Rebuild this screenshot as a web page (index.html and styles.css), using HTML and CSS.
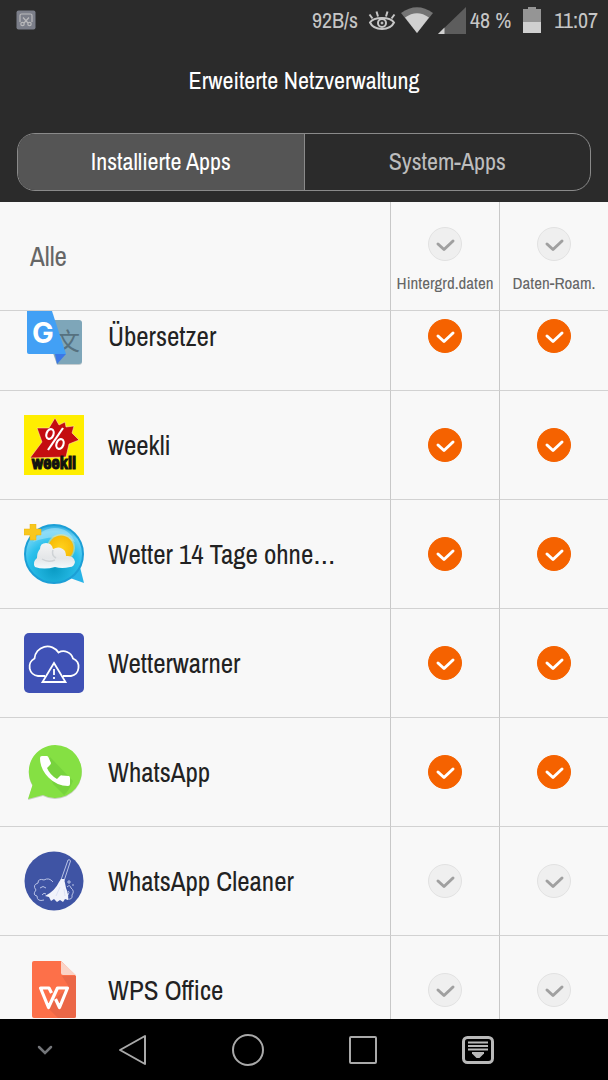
FILE: index.html
```html
<!DOCTYPE html>
<html lang="de">
<head>
    <meta charset="UTF-8">
    <meta name="viewport" content="width=device-width, initial-scale=1.0">
    <title>Erweiterte Netzverwaltung</title>
    <link rel="stylesheet" href="styles.css">
</head>
<body>
    <header class="top">
        <div class="status-bar">
            <svg class="shot-icon" width="20" height="20" viewBox="0 0 20 20">
                <rect x="0.5" y="0.5" width="19" height="19" rx="2" fill="#7b7e89"/>
                <g fill="none" stroke="#b9b9bb" stroke-width="1.2">
                    <path d="M4 12V5.500Q4 4 5.500 4H14.500Q16 4 16 5.500V12M7 7.500L12 13M13 7.500L8 13"/>
                    <circle cx="6.500" cy="14" r="1.700"/>
                    <circle cx="13.500" cy="14" r="1.700"/>
                </g>
            </svg>
            <div class="status-right">
                <span>92B/s</span>
                <svg width="28" height="24" viewBox="0 0 28 24" fill="none" stroke="#c6c6c6" stroke-width="2">
                    <path d="M2 14.500C6 8.500 22 8.500 26 14.500C22 23 6 23 2 14.500Z"/>
                    <circle cx="14" cy="15" r="4"/>
                    <circle cx="14" cy="15" r="1" fill="#c6c6c6" stroke-width="1"/>
                    <path d="M4.500 10.500L1.500 6.500M10 8.500L8.500 3.500M18 8.500L19.500 3.500M23.500 10.500L26.500 6.500"/>
                </svg>
                <svg width="32" height="26" viewBox="0 0 32 26">
                    <path d="M0 6Q16 -5.500 32 6L16 26Z" fill="#747474"/>
                    <path d="M4 10.500Q16 2 28 10.500L16 26Z" fill="#d0d0d0"/>
                </svg>
                <svg width="28" height="27" viewBox="0 0 28 27">
                    <path d="M28 0V27H0Z" fill="#5d5d5d"/>
                    <path d="M6.500 20.500V27H0Z" fill="#d0d0d0"/>
                </svg>
                <span class="percent">48 %</span>
                <svg width="18" height="26" viewBox="0 0 18 26">
                    <path d="M0 2H5V0H13V2H18V16H0Z" fill="#959595"/>
                    <path d="M0 15H18V26H0Z" fill="#d0d0d0"/>
                </svg>
                <span class="clock">11:07</span>
            </div>
        </div>
        <h1>Erweiterte Netzverwaltung</h1>
        <div class="tabs">
            <button class="tab active" type="button">Installierte Apps</button>
            <button class="tab" type="button">System-Apps</button>
        </div>
    </header>

    <main class="list" id="list">
        <table>
            <thead>
                <tr>
                    <th class="all">Alle</th>
                    <th class="check">
                        <input type="checkbox" id="all-background">
                        <label for="all-background">Hintergrd.daten</label>
                    </th>
                    <th class="check">
                        <input type="checkbox" id="all-roaming">
                        <label for="all-roaming">Daten-Roam.</label>
                    </th>
                </tr>
            </thead>
            <tbody>
                <tr>
                    <td><div class="app">
                        <svg class="app-icon" viewBox="0 0 60 60">
                            <path d="M18 14H55Q58 14 58 17V55Q58 58 55 58H33Z" fill="#c5cdd0" transform="translate(0 1)"/>
                            <path d="M18 14H55Q58 14 58 17V55Q58 58 55 58H33Z" fill="#7ea6b9"/>
                            <text x="44" y="44" class="cjk-mark">文</text>
                            <path d="M31 48H42L33 58Z" fill="#3b78e7"/>
                            <path d="M5 2H27L42 48H5Q3 48 3 46V4Q3 2 5 2Z" fill="#42a0f5"/>
                            <text x="19" y="37" class="g-mark">G</text>
                        </svg>
                        <span>Übersetzer</span>
                    </div></td>
                    <td class="check"><input type="checkbox" aria-label="Übersetzer: Hintergrd.daten" checked></td>
                    <td class="check"><input type="checkbox" aria-label="Übersetzer: Daten-Roam." checked></td>
                </tr>
                <tr>
                    <td><div class="app">
                        <svg class="app-icon" viewBox="0 0 60 60">
                            <rect width="60" height="60" fill="#ffee00"/>
                            <path d="M31 3L35 10L41 7L42 12L50 11L48 18L55 25L45 29L42 42L6 43L18 27L13 13L25 13Z" fill="#c40d10" stroke="#fff3c0" stroke-width="0.500"/>
                            <g fill="none" stroke="#fff" stroke-width="2.200">
                                <ellipse cx="26" cy="19" rx="3.500" ry="5" transform="rotate(20 26 19)"/>
                                <ellipse cx="36" cy="29" rx="3.500" ry="5" transform="rotate(20 36 29)"/>
                                <path d="M39 13L24 35"/>
                            </g>
                            <text x="30" y="54" class="weekli-mark">weekli</text>
                        </svg>
                        <span>weekli</span>
                    </div></td>
                    <td class="check"><input type="checkbox" aria-label="weekli: Hintergrd.daten" checked></td>
                    <td class="check"><input type="checkbox" aria-label="weekli: Daten-Roam." checked></td>
                </tr>
                <tr>
                    <td><div class="app">
                        <svg class="app-icon" viewBox="0 0 60 60">
                            <defs>
                                <radialGradient id="sky" cx="50%" cy="75%" r="75%">
                                    <stop offset="0" stop-color="#0a9bc4"/>
                                    <stop offset="0.600" stop-color="#2bc0ec"/>
                                    <stop offset="0.850" stop-color="#6bd2f4"/>
                                    <stop offset="1" stop-color="#22a5dc"/>
                                </radialGradient>
                                <radialGradient id="sun">
                                    <stop offset="0" stop-color="#ffd21c"/>
                                    <stop offset="1" stop-color="#f7bb08"/>
                                </radialGradient>
                                <linearGradient id="cloud" x2="0" y2="1">
                                    <stop offset="0" stop-color="#f4f4f4"/>
                                    <stop offset="0.600" stop-color="#e4e6e8"/>
                                    <stop offset="1" stop-color="#f4fafd"/>
                                </linearGradient>
                            </defs>
                            <path d="M46 54L60 59L56 43Z" fill="#27b3e6"/>
                            <circle cx="30" cy="30" r="29" fill="url(#sky)" stroke="#1c9fd6" stroke-width="2"/>
                            <path d="M9 18Q17 4 31 4Q45 4 51 18Q30 9 9 18Z" fill="#a5e3f8" opacity="0.600"/>
                            <circle cx="37" cy="24" r="14" fill="#ffe680" opacity="0.500"/>
                            <circle cx="37" cy="24" r="12.500" fill="url(#sun)"/>
                            <path d="M11 43Q8 38 13 34Q13 28 16 25Q16 19 22 19Q28 19 29 25Q36 21 41 27Q42 30 42 32Q50 31 51 38Q50 43 46 43Q38 45 31 43Q20 46 11 43Z" fill="url(#cloud)"/>
                            <path d="M29 26Q27 31 32 34M18 35Q24 39 31 36" fill="none" stroke="#cfd3d6" stroke-width="1.500"/>
                            <path d="M6 0H12V5H17V11H12V16H6V11H0V5H6Z" fill="#f8c71d" stroke="#edb20d" stroke-width="0.500"/>
                        </svg>
                        <span>Wetter 14 Tage ohne…</span>
                    </div></td>
                    <td class="check"><input type="checkbox" aria-label="Wetter 14 Tage: Hintergrd.daten" checked></td>
                    <td class="check"><input type="checkbox" aria-label="Wetter 14 Tage: Daten-Roam." checked></td>
                </tr>
                <tr>
                    <td><div class="app">
                        <svg class="app-icon" viewBox="0 0 60 60">
                            <rect width="60" height="60" rx="5" fill="#3f51b5"/>
                            <g fill="none" stroke="#fff" stroke-width="1.800">
                                <path d="M21 43H14A9.300 9.300 0 0 1 10.500 25.500A13 13 0 0 1 34.500 19.500A10 10 0 0 1 49 25.500A9.200 9.200 0 0 1 47 43H39"/>
                                <path d="M30 30L18.500 49H41.500Z"/>
                                <path d="M30 36V42M30 44V46"/>
                            </g>
                        </svg>
                        <span>Wetterwarner</span>
                    </div></td>
                    <td class="check"><input type="checkbox" aria-label="Wetterwarner: Hintergrd.daten" checked></td>
                    <td class="check"><input type="checkbox" aria-label="Wetterwarner: Daten-Roam." checked></td>
                </tr>
                <tr>
                    <td><div class="app">
                        <svg class="app-icon" viewBox="0 0 60 60">
                            <path d="M31 3A26.500 26.500 0 1 1 19 53L4 57L8.500 43A26.500 26.500 0 0 1 31 3Z" fill="#c9cfc4" transform="translate(0 1)"/>
                            <path d="M31 3A26.500 26.500 0 1 1 19 53L4 57L8.500 43A26.500 26.500 0 0 1 31 3Z" fill="#85e043"/>
                            <path d="M26 15L49 39Q45 49 40 53L29 42L23 26Z" fill="#77d33d"/>
                            <path d="M16 16Q16 14 18 14H23Q24 14 24.500 15.500L27 21Q27 22 26 23L23 26Q26 33 33 37L36 34Q37 33 38 33.500L45 34Q46 34.500 46 36V42Q46 44 44 44Q33 44 24.500 35.500Q16 27 16 16Z" fill="#fff"/>
                        </svg>
                        <span>WhatsApp</span>
                    </div></td>
                    <td class="check"><input type="checkbox" aria-label="WhatsApp: Hintergrd.daten" checked></td>
                    <td class="check"><input type="checkbox" aria-label="WhatsApp: Daten-Roam." checked></td>
                </tr>
                <tr>
                    <td><div class="app">
                        <svg class="app-icon" viewBox="0 0 60 60">
                            <circle cx="30" cy="30" r="29.500" fill="#3f54a4"/>
                            <g fill="none" stroke="#b9c3e6" stroke-width="1">
                                <path d="M44 9Q46 8 46.500 10L40 30L37 29Z"/>
                                <path d="M20 49Q13 51 13 45Q8 44 12 39Q8 34 14 32Q14 27 20 29Q25 26 29 31M16 37Q19 34 22 37M18 44Q20 41 22 43"/>
                                <path d="M43 48Q49 49 48 44Q51 40 47 37Q46 33 43 36M44 40Q46 41 44 44"/>
                                <path d="M45 29V33M43 31H47M49 33V35"/>
                            </g>
                            <path d="M35 31L37 28H40L41 32L42 37Q45 44 44 49L41 48L39 51L36 49L33 51L30 48L27 50L25 46L21 45Q31 40 35 31Z" fill="#f1f3fb"/>
                            <path d="M36 36L32 45M40 38L41 45" stroke="#d3daf0" stroke-width="0.700"/>
                        </svg>
                        <span>WhatsApp Cleaner</span>
                    </div></td>
                    <td class="check"><input type="checkbox" aria-label="WhatsApp Cleaner: Hintergrd.daten"></td>
                    <td class="check"><input type="checkbox" aria-label="WhatsApp Cleaner: Daten-Roam."></td>
                </tr>
                <tr>
                    <td><div class="app">
                        <svg class="app-icon" viewBox="0 0 60 60">
                            <path d="M10 1H37L52 16V56Q52 58 50 58H10Q8 58 8 56V3Q8 1 10 1Z" fill="#fd7049"/>
                            <path d="M52 31V56Q52 58 50 58H34L22 46L45 27L38 16H52Z" fill="#eb6747"/>
                            <path d="M37 1L52 15H39Q37 15 37 13Z" fill="#fbd3c6"/>
                            <path d="M27.500 33L25 28H16.500L24.500 47.500L33.500 28H43.500L35.500 47.500L31.500 39" fill="none" stroke="#fff" stroke-width="3.200" stroke-linejoin="round"/>
                        </svg>
                        <span>WPS Office</span>
                    </div></td>
                    <td class="check"><input type="checkbox" aria-label="WPS Office: Hintergrd.daten"></td>
                    <td class="check"><input type="checkbox" aria-label="WPS Office: Daten-Roam."></td>
                </tr>
            </tbody>
        </table>
    </main>

    <nav class="nav-bar">
        <button type="button" class="small" aria-label="Leiste ausblenden">
            <svg width="16" height="10" viewBox="0 0 16 10" fill="none" stroke="#737579" stroke-width="2.500" stroke-linecap="round">
                <path d="M2 2L8 8L14 2"/>
            </svg>
        </button>
        <button type="button" aria-label="Zurück">
            <svg width="32" height="32" viewBox="0 0 32 32" fill="none" stroke="#a9a9a9" stroke-width="2" stroke-linejoin="round">
                <path d="M28 2V30L3 16Z"/>
            </svg>
        </button>
        <button type="button" aria-label="Startbildschirm">
            <svg width="32" height="32" viewBox="0 0 32 32" fill="none" stroke="#a9a9a9" stroke-width="2">
                <circle cx="16" cy="16" r="15"/>
            </svg>
        </button>
        <button type="button" aria-label="Letzte Apps">
            <svg width="32" height="32" viewBox="0 0 32 32" fill="none" stroke="#a9a9a9" stroke-width="2">
                <rect x="3" y="3" width="26" height="26" rx="1"/>
            </svg>
        </button>
        <button type="button" aria-label="Benachrichtigungen">
            <svg width="32" height="32" viewBox="0 0 32 32" fill="none" stroke="#b9b9b9" stroke-width="3">
                <rect x="1.500" y="3.500" width="29" height="25" rx="4"/>
                <path d="M6 8.500H26M6 12H26M6 15.500H26" stroke-width="2"/>
                <path d="M10 18H22V19.500L17.500 24H14.500L10 19.500Z" fill="#b9b9b9" stroke="none"/>
            </svg>
        </button>
    </nav>

    <script>
        // open the list a little scrolled down
        document.getElementById('list').scrollTop = 29;
    </script>
</body>
</html>
```
FILE: styles.css
```css
* {
    box-sizing: border-box;
}
body {
    margin: 0;
    height: 100vh;
    display: flex;
    flex-direction: column;
    background-color: #f8f8f8;
    color: #222;
    font-family: "Archivo Narrow", "Liberation Sans Narrow", "Arial Narrow", sans-serif;
}
button {
    font-family: inherit;
    cursor: pointer;
}
.top {
    background-color: #2b2b2b;
    padding-bottom: 11px;
}
.status-bar {
    display: flex;
    justify-content: space-between;
    align-items: center;
    height: 40px;
    padding: 0 10px 0 16px;
    color: #c6c6c6;
    font-size: 22px;
}
.status-right {
    display: flex;
    align-items: center;
    gap: 8px;
}
.status-right svg + svg {
    margin-left: -3px;
}
.status-right .percent {
    margin-left: -4px;
}
.status-right span + svg {
    margin-left: 2px;
}
.status-right .percent + svg {
    margin-left: 4px;
}
.status-right .clock {
    margin-left: 5px;
}
h1 {
    margin: 0;
    color: #fff;
    font-size: 24px;
    font-weight: normal;
    line-height: 80px;
    text-align: center;
}
.tabs {
    display: flex;
    height: 58px;
    margin: 13px 17px 0;
    border: 1px solid #8a8a8a;
    border-radius: 18px;
    overflow: hidden;
}
.tab {
    flex: 1;
    padding: 0 0 2px;
    border: none;
    background: none;
    color: #bdbdbd;
    font-size: 24px;
}
.tab.active {
    background-color: #555;
    color: #fff;
    border-right: 1px solid #8a8a8a;
}
.list {
    flex: 1;
    min-height: 0;
    overflow-y: auto;
    scrollbar-width: none;
}
table {
    width: 100%;
    table-layout: fixed;
    border-collapse: separate;
    border-spacing: 0;
}
th, td {
    height: 109px;
    padding: 0;
    border-bottom: 1px solid #d2d2d2;
    font-weight: normal;
}
th {
    position: sticky;
    top: 0;
    z-index: 1;
    background-color: #f8f8f8;
    color: #666;
    font-size: 17px;
}
.all {
    padding-left: 30px;
    font-size: 27px;
    text-align: left;
}
.check {
    width: 109px;
    border-left: 1px solid #c8c8c8;
    text-align: center;
    vertical-align: middle;
}
th.check {
    padding-top: 8px;
}
.check label {
    display: block;
    margin-top: 10px;
    white-space: nowrap;
}
.app {
    display: flex;
    align-items: center;
    gap: 24px;
    padding-left: 24px;
    font-size: 27px;
    white-space: nowrap;
}
.app-icon {
    width: 60px;
    height: 60px;
    flex: none;
}
input[type="checkbox"] {
    appearance: none;
    display: block;
    width: 34px;
    height: 34px;
    margin: 0 auto;
    border: 1px solid #e2e2e2;
    border-radius: 50%;
    background: #efefef url("data:image/svg+xml,%3Csvg xmlns='http://www.w3.org/2000/svg' viewBox='0 0 32 32'%3E%3Cpath d='M9 16L15 21.500L24 13' fill='none' stroke='%23a0a0a0' stroke-width='3' stroke-linecap='round' stroke-linejoin='round'/%3E%3C/svg%3E") center / 32px no-repeat;
    cursor: pointer;
}
input[type="checkbox"]:checked {
    border-color: #f56200;
    background-color: #f56200;
    background-image: url("data:image/svg+xml,%3Csvg xmlns='http://www.w3.org/2000/svg' viewBox='0 0 32 32'%3E%3Cpath d='M9 16L15 21.500L24 13' fill='none' stroke='%23ffffff' stroke-width='3' stroke-linecap='round' stroke-linejoin='round'/%3E%3C/svg%3E");
}
.g-mark, .cjk-mark, .weekli-mark {
    text-anchor: middle;
}
.g-mark {
    fill: #fff;
    font: bold 29px Inter, sans-serif;
}
.cjk-mark {
    fill: #56717f;
    font: 24px "Noto Sans CJK SC", sans-serif;
}
.weekli-mark {
    fill: #111;
    stroke: #111;
    font: bold 18px "Archivo Narrow", "Liberation Sans Narrow", "Arial Narrow", sans-serif;
}
.nav-bar {
    display: flex;
    align-items: center;
    height: 61px;
    padding-left: 15px;
    background-color: #000;
}
.nav-bar button {
    display: flex;
    flex: 0 1 115px;
    justify-content: center;
    padding: 0;
    border: none;
    background: none;
}
.nav-bar .small {
    flex-basis: 60px;
}
```
